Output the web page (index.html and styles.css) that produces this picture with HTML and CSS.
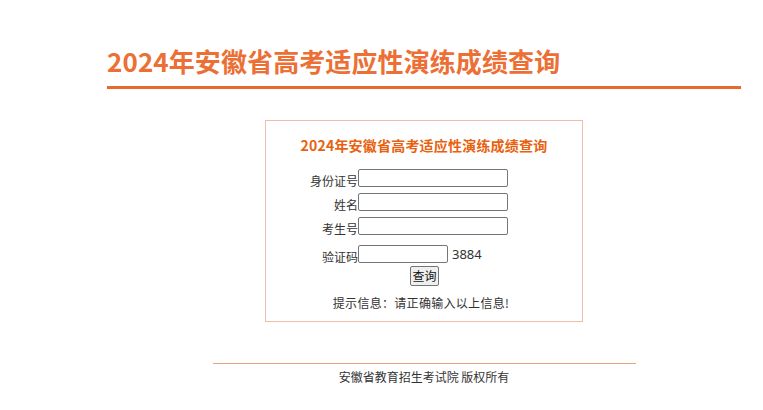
FILE: index.html
```html
<!DOCTYPE html>
<html lang="zh-CN">
<head>
<meta charset="utf-8">
<title>2024年安徽省高考适应性演练成绩查询</title>
<link rel="stylesheet" href="styles.css">
</head>
<body>
<div class="wrap">
  <div class="header">
    <h1 class="site-title">2024年安徽省高考适应性演练成绩查询</h1>
  </div>
  <div class="query-box">
    <h2 class="box-title">2024年安徽省高考适应性演练成绩查询</h2>
    <form class="query-form">
      <label class="lbl" for="sfz">身份证号</label>
      <div class="field"><input class="inp" id="sfz" type="text"></div>
      <label class="lbl" for="xm">姓名</label>
      <div class="field"><input class="inp" id="xm" type="text"></div>
      <label class="lbl" for="ksh">考生号</label>
      <div class="field"><input class="inp" id="ksh" type="text"></div>
      <label class="lbl lbl-code" for="yzm">验证码</label>
      <div class="field field-code"><input class="inp inp-code" id="yzm" type="text"><span class="code">3884</span></div>
    </form>
    <div class="btn-row"><button class="btn" type="button">查询</button></div>
    <p class="hint">提示信息：请正确输入以上信息!</p>
  </div>
  <div class="footer">
    <p class="copy">安徽省教育招生考试院 版权所有</p>
  </div>
</div>
</body>
</html>
```
FILE: styles.css
```css
html, body {
  margin: 0;
  padding: 0;
  background: #ffffff;
}
body {
  font-family: "Microsoft YaHei", "Noto Sans CJK SC", "Noto Sans", sans-serif;
  color: #333333;
  font-size: 12px;
}
.wrap {
  margin-left: 107px;
  width: 634px;
}
.header {
  padding-top: 46px;
  padding-bottom: 10px;
  border-bottom: 3px solid #e8692d;
}
.site-title {
  margin: 0;
  font-size: 26px;
  line-height: 30px;
  font-weight: 700;
  color: #ec6f35;
  letter-spacing: 0.1px;
}
.query-box {
  width: 318px;
  box-sizing: border-box;
  margin: 31px auto 0;
  border: 1px solid #efbea6;
  padding: 14px 0 8px;
}
.box-title {
  margin: 0;
  text-align: center;
  font-size: 14px;
  line-height: 20px;
  font-weight: 700;
  color: #e8620e;
  letter-spacing: 0.2px;
}
.query-form {
  margin: 14px 0 0;
  display: grid;
  grid-template-columns: 92px auto;
  row-gap: 6px;
  align-items: end;
}
.lbl {
  text-align: right;
  font-size: 12px;
  line-height: 14px;
  color: #333;
  transform: translateY(1px);
}
.lbl-code {
  margin-top: 4px;
}
.field {
  display: flex;
  align-items: center;
}
.field-code {
  margin-top: 4px;
}
.inp {
  width: 150px;
  height: 18px;
  box-sizing: border-box;
  border: 1px solid #767676;
  border-radius: 2px;
  padding: 0 2px;
  margin: 0;
  font-size: 12px;
  background: #fff;
}
.inp-code {
  width: 90px;
}
.code {
  margin-left: 4px;
  font-size: 13px;
  line-height: 16px;
  color: #333;
  font-family: "Microsoft YaHei", "Noto Sans", "Noto Sans CJK SC", sans-serif;
}
.btn-row {
  display: flex;
  justify-content: center;
  margin-top: 3px;
}
.btn {
  height: 20px;
  box-sizing: border-box;
  padding: 0 1px;
  border: 1px solid #767676;
  border-radius: 2px;
  background: #efefef;
  font-family: inherit;
  font-size: 12px;
  line-height: 16px;
  color: #111;
  margin-left: 1px;
}
.hint {
  margin: 7px 0 0;
  text-align: center;
  font-size: 12px;
  line-height: 20px;
  color: #333;
  letter-spacing: 0.3px;
  padding-right: 6px;
}
.footer {
  width: 423px;
  margin: 41px auto 0;
  border-top: 1px solid #eba27e;
  padding-top: 3px;
}
.copy {
  margin: 0;
  text-align: center;
  font-size: 12px;
  line-height: 20px;
  color: #333;
}
```
